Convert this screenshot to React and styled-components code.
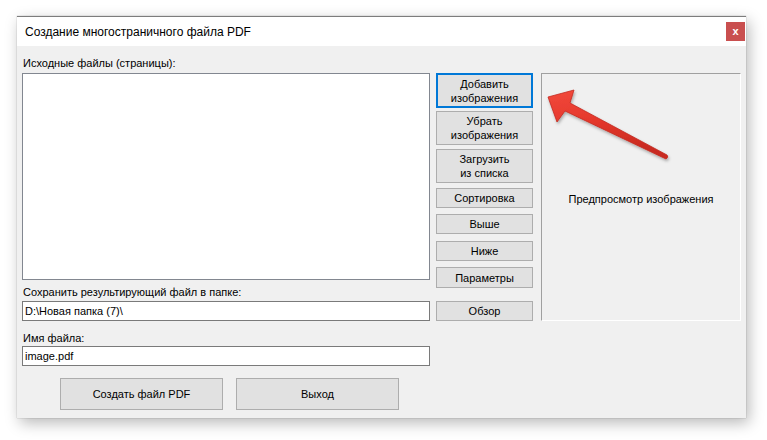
import React from "react";
import styled, { createGlobalStyle } from "styled-components";

const GlobalStyle = createGlobalStyle`
  html, body {
    margin: 0;
    padding: 0;
    background: #ffffff;
  }
  body {
    font-family: "Liberation Sans", Arial, sans-serif;
    font-size: 11px;
    color: #000000;
  }
`;

const Page = styled.div`
  position: relative;
  width: 767px;
  height: 440px;
  padding: 16px 0 0 17px;
  box-sizing: border-box;
  overflow: hidden;
`;

const Window = styled.div`
  width: 729px;
  height: 402px;
  background: #f0f0f0;
  border-top: 1px solid #7d7d7d;
  box-sizing: border-box;
  box-shadow: 0 0 1px rgba(0, 0, 0, 0.35), 3px 5px 14px rgba(0, 0, 0, 0.28);
  display: flex;
  flex-direction: column;
`;

const TitleBar = styled.div`
  height: 29px;
  background: #ffffff;
  display: flex;
  align-items: center;
  justify-content: space-between;
  padding: 0 1px 0 8px;
`;

const Title = styled.div`
  font-size: 12px;
  padding-top: 1px;
`;

const CloseButton = styled.div`
  width: 19px;
  height: 19px;
  background: #c94f4f;
  color: #ffffff;
  font-size: 11px;
  font-weight: bold;
  display: flex;
  align-items: center;
  justify-content: center;
  line-height: 1;
`;

const Body = styled.div`
  flex: 1;
  padding: 0 5px;
  display: flex;
  flex-direction: column;
`;

const TopRow = styled.div`
  display: flex;
  align-items: flex-start;
`;

const LeftCol = styled.div`
  width: 408px;
  display: flex;
  flex-direction: column;
`;

const Label = styled.div`
  height: ${(p) => p.h}px;
  display: flex;
  align-items: flex-end;
  padding-left: 1px;
  padding-bottom: ${(p) => p.pb || 3}px;
  box-sizing: border-box;
`;

const ListBox = styled.div`
  height: 207px;
  background: #ffffff;
  border: 1px solid #828790;
  box-sizing: border-box;
`;

const TextField = styled.div`
  height: 20px;
  background: #ffffff;
  border: 1px solid #7a7a7a;
  box-sizing: border-box;
  display: flex;
  align-items: center;
  padding-left: 2px;
`;

const ButtonCol = styled.div`
  width: 97px;
  margin-left: 6px;
  margin-top: 27px;
  display: flex;
  flex-direction: column;
`;

const Button = styled.div`
  height: ${(p) => p.h || 20}px;
  margin-top: ${(p) => p.mt || 0}px;
  background: #e1e1e1;
  border: ${(p) => (p.focused ? "2px solid #0078d7" : "1px solid #adadad")};
  box-sizing: border-box;
  display: flex;
  align-items: center;
  justify-content: center;
  text-align: center;
  line-height: 14px;
`;

const Preview = styled.div`
  width: 200px;
  height: 248px;
  margin-left: 8px;
  margin-top: 27px;
  border-top: 1px solid #a0a0a0;
  border-left: 1px solid #a0a0a0;
  border-right: 1px solid #ffffff;
  border-bottom: 1px solid #ffffff;
  box-sizing: border-box;
  display: flex;
  align-items: center;
  justify-content: center;
  padding-top: 3px;
`;

const NameBlock = styled.div`
  width: 408px;
  display: flex;
  flex-direction: column;
`;

const ActionRow = styled.div`
  display: flex;
  gap: 13px;
  margin-top: 12px;
  padding-left: 38px;
`;

const ActionButton = styled(Button)`
  width: 163px;
  height: 32px;
`;

const Arrow = styled.svg`
  position: absolute;
  left: 0;
  top: 0;
  pointer-events: none;
`;

export default function App() {
  return (
    <>
      <GlobalStyle />
      <Page>
        <Window>
          <TitleBar>
            <Title>Создание многостраничного файла PDF</Title>
            <CloseButton>x</CloseButton>
          </TitleBar>
          <Body>
            <TopRow>
              <LeftCol>
                <Label h={27} pb={4}>Исходные файлы (страницы):</Label>
                <ListBox />
                <Label h={21}>Сохранить результирующий файл в папке:</Label>
                <TextField>D:\Новая папка (7)\</TextField>
              </LeftCol>
              <ButtonCol>
                <Button focused h={35}>
                  Добавить
                  <br />
                  изображения
                </Button>
                <Button h={34} mt={3}>
                  Убрать
                  <br />
                  изображения
                </Button>
                <Button h={34} mt={4}>
                  Загрузить
                  <br />
                  из списка
                </Button>
                <Button mt={5}>Сортировка</Button>
                <Button mt={6}>Выше</Button>
                <Button mt={7}>Ниже</Button>
                <Button h={21} mt={6}>Параметры</Button>
                <Button mt={13}>Обзор</Button>
              </ButtonCol>
              <Preview>Предпросмотр изображения</Preview>
            </TopRow>
            <NameBlock>
              <Label h={25} pb={2}>Имя файла:</Label>
              <TextField>image.pdf</TextField>
            </NameBlock>
            <ActionRow>
              <ActionButton>Создать файл PDF</ActionButton>
              <ActionButton>Выход</ActionButton>
            </ActionRow>
          </Body>
        </Window>
        <Arrow width="767" height="440" viewBox="0 0 767 440">
          <defs>
            <linearGradient id="arrowFill" x1="0" y1="0" x2="0.3" y2="1">
              <stop offset="0" stopColor="#f2493c" />
              <stop offset="0.5" stopColor="#e5382c" />
              <stop offset="1" stopColor="#c92a20" />
            </linearGradient>
            <filter id="arrowShadow" x="-20%" y="-20%" width="140%" height="140%">
              <feDropShadow dx="1" dy="2" stdDeviation="1.5" floodColor="#000" floodOpacity="0.3" />
            </filter>
          </defs>
          <path
            d="M548 97 L574 90 L570 103 L667 155 Q669 157 666 159 L565 111 L557 122 Z"
            fill="url(#arrowFill)"
            stroke="#c32a20"
            strokeWidth="0.8"
            strokeLinejoin="round"
            filter="url(#arrowShadow)"
          />
        </Arrow>
      </Page>
    </>
  );
}
